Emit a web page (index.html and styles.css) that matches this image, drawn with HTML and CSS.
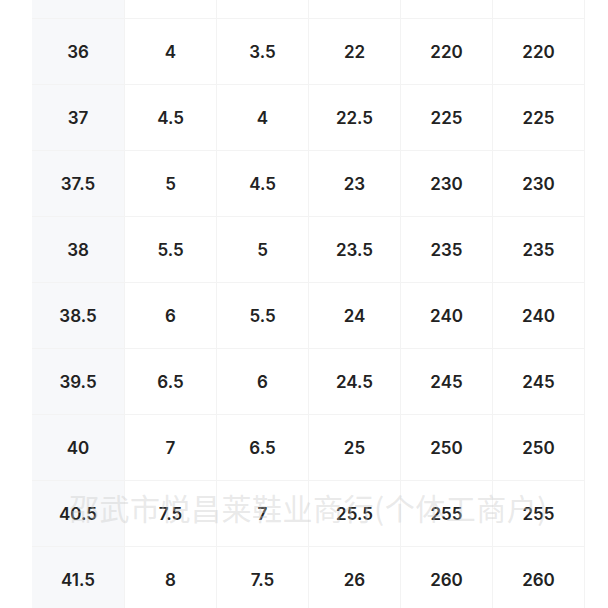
FILE: index.html
```html
<!DOCTYPE html>
<html lang="zh">
<head>
<meta charset="utf-8">
<link rel="stylesheet" href="styles.css">
</head>
<body>
<div class="page">
  <div class="chart">
    <div class="row"><div class="cell first"></div><div class="cell"></div><div class="cell"></div><div class="cell"></div><div class="cell"></div><div class="cell"></div></div>
    <div class="row"><div class="cell first">36</div><div class="cell">4</div><div class="cell">3.5</div><div class="cell">22</div><div class="cell">220</div><div class="cell">220</div></div>
    <div class="row"><div class="cell first">37</div><div class="cell">4.5</div><div class="cell">4</div><div class="cell">22.5</div><div class="cell">225</div><div class="cell">225</div></div>
    <div class="row"><div class="cell first">37.5</div><div class="cell">5</div><div class="cell">4.5</div><div class="cell">23</div><div class="cell">230</div><div class="cell">230</div></div>
    <div class="row"><div class="cell first">38</div><div class="cell">5.5</div><div class="cell">5</div><div class="cell">23.5</div><div class="cell">235</div><div class="cell">235</div></div>
    <div class="row"><div class="cell first">38.5</div><div class="cell">6</div><div class="cell">5.5</div><div class="cell">24</div><div class="cell">240</div><div class="cell">240</div></div>
    <div class="row"><div class="cell first">39.5</div><div class="cell">6.5</div><div class="cell">6</div><div class="cell">24.5</div><div class="cell">245</div><div class="cell">245</div></div>
    <div class="row"><div class="cell first">40</div><div class="cell">7</div><div class="cell">6.5</div><div class="cell">25</div><div class="cell">250</div><div class="cell">250</div></div>
    <div class="row"><div class="cell first">40.5</div><div class="cell">7.5</div><div class="cell">7</div><div class="cell">25.5</div><div class="cell">255</div><div class="cell">255</div></div>
    <div class="row"><div class="cell first">41.5</div><div class="cell">8</div><div class="cell">7.5</div><div class="cell">26</div><div class="cell">260</div><div class="cell">260</div></div>
  </div>
  <div class="watermark">邵武市悦昌莱鞋业商行(个体工商户)</div>
</div>
</body>
</html>
```
FILE: styles.css
```css
html, body {
  margin: 0;
  padding: 0;
  background: #ffffff;
}
.page {
  position: relative;
  width: 608px;
  height: 608px;
  overflow: hidden;
  font-family: "Inter", "Noto Sans", sans-serif;
}
.chart {
  margin-top: -47px;
  margin-left: 32px;
  width: 552px;
  border-right: 1px solid #f3f3f3;
}
.row {
  display: grid;
  grid-template-columns: repeat(6, 92px);
  height: 66px;
  border-bottom: 1px solid #f3f3f3;
  box-sizing: border-box;
}
.cell {
  display: flex;
  align-items: center;
  justify-content: center;
  font-size: 17px;
  font-weight: 600;
  color: #222;
  border-left: 1px solid #f3f3f3;
}
.cell.first {
  background: #f7f8fa;
  border-left: none;
}
.watermark {
  position: absolute;
  left: 69px;
  top: 485px;
  font-family: "Noto Sans CJK SC", sans-serif;
  font-size: 30px;
  color: rgba(200, 200, 200, 0.4);
  white-space: nowrap;
  letter-spacing: 0.5px;
}
```
